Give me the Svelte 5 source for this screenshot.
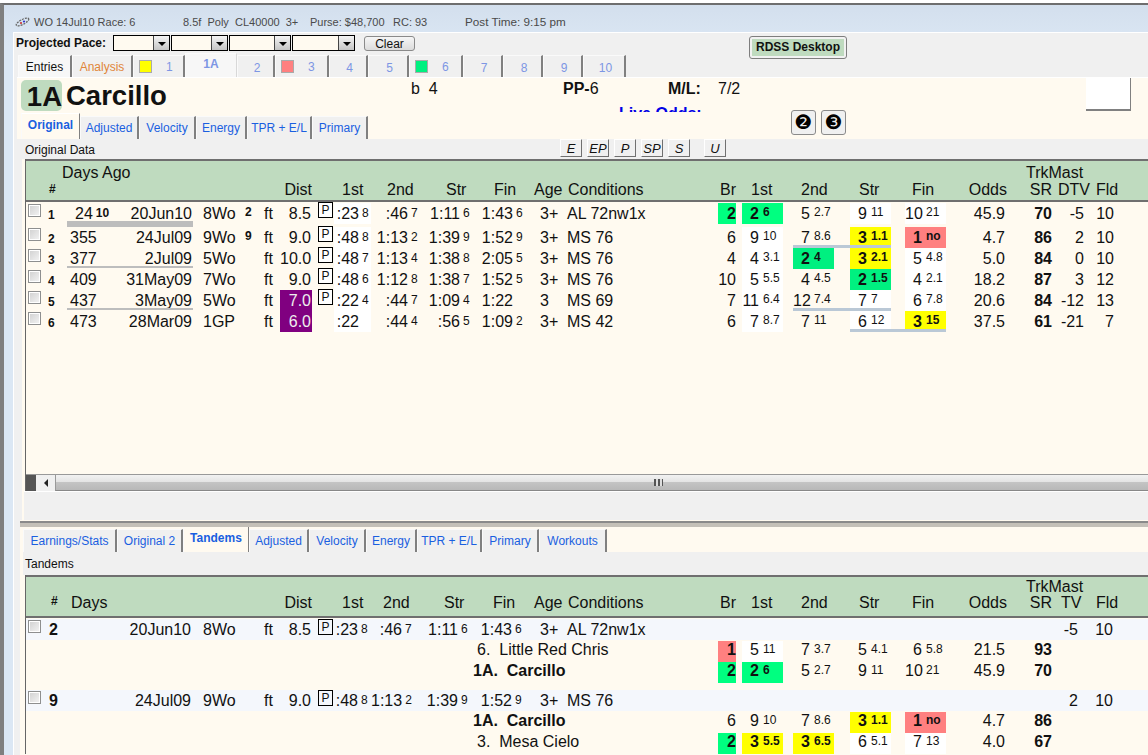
<script lang="ts">
  const raceTabs = [
    { label: '1', w: 52, swatch: 'yellow' },
    { label: '1A', w: 52, active: true },
    { label: '2', w: 38 },
    { label: '3', w: 54, swatch: 'pink' },
    { label: '4', w: 39 },
    { label: '5', w: 41 },
    { label: '6', w: 54, swatch: 'green' },
    { label: '7', w: 40 },
    { label: '8', w: 40 },
    { label: '9', w: 40 },
    { label: '10', w: 43 },
  ];

  const upperTabs = [
    { label: 'Original', w: 59, active: true },
    { label: 'Adjusted', w: 59 },
    { label: 'Velocity', w: 57 },
    { label: 'Energy', w: 51 },
    { label: 'TPR + E/L', w: 65 },
    { label: 'Primary', w: 56 },
  ];

  const lowerTabs = [
    { label: 'Earnings/Stats', w: 94 },
    { label: 'Original 2', w: 66 },
    { label: 'Tandems', w: 66, active: true },
    { label: 'Adjusted', w: 60 },
    { label: 'Velocity', w: 57 },
    { label: 'Energy', w: 51 },
    { label: 'TPR + E/L', w: 65 },
    { label: 'Primary', w: 57 },
    { label: 'Workouts', w: 68 },
  ];

  // t = [value, rank], p = [pos, lengths, colour, underline]
  const rows = [
    {
      n: 1, days: '24', daysSup: '10', date: '20Jun10', race: '8Wo', post: '2', dist: '8.5', pp: true,
      t: [[':23', '8'], [':46', '7'], ['1:11', '6'], ['1:43', '6']], age: '3+', cond: 'AL 72nw1x',
      br: '2', brC: 'g',
      p: [['2', '6', 'g'], ['5', '2.7', ''], ['9', '11', 'w'], ['10', '21', 'w']],
      odds: '45.9', sr: '70', dtv: '-5', fld: '10', ul: 'thick',
    },
    {
      n: 2, days: '355', date: '24Jul09', race: '9Wo', post: '9', dist: '9.0', pp: true,
      t: [[':48', '8'], ['1:13', '2'], ['1:39', '9'], ['1:52', '9']], age: '3+', cond: 'MS 76',
      br: '6',
      p: [['9', '10', 'w'], ['7', '8.6', '', 'full'], ['3', '1.1', 'y', 'inner'], ['1', 'no', 'p']],
      odds: '4.7', sr: '86', dtv: '2', fld: '10',
    },
    {
      n: 3, days: '377', date: '2Jul09', race: '5Wo', dist: '10.0', pp: true,
      t: [[':48', '7'], ['1:13', '4'], ['1:38', '8'], ['2:05', '5']], age: '3+', cond: 'MS 76',
      br: '4',
      p: [['4', '3.1', 'w'], ['2', '4', 'g2'], ['3', '2.1', 'y'], ['5', '4.8', 'w']],
      odds: '5.0', sr: '84', dtv: '0', fld: '10', ul: 'thin',
    },
    {
      n: 4, days: '409', date: '31May09', race: '7Wo', dist: '9.0', pp: true,
      t: [[':48', '6'], ['1:12', '8'], ['1:38', '7'], ['1:52', '5']], age: '3+', cond: 'MS 76',
      br: '10',
      p: [['5', '5.5', 'w'], ['4', '4.5', ''], ['2', '1.5', 'g2'], ['4', '2.1', 'w']],
      odds: '18.2', sr: '87', dtv: '3', fld: '12',
    },
    {
      n: 5, days: '437', date: '3May09', race: '5Wo', dist: '7.0', short: true, pp: true,
      t: [[':22', '4'], [':44', '7'], ['1:09', '4'], ['1:22', '']], age: '3', cond: 'MS 69',
      br: '7',
      p: [['11', '6.4', 'w'], ['12', '7.4', '', 'full'], ['7', '7', 'w', 'inner'], ['6', '7.8', 'w']],
      odds: '20.6', sr: '84', dtv: '-12', fld: '13', ul: 'thin',
    },
    {
      n: 6, days: '473', date: '28Mar09', race: '1GP', dist: '6.0', short: true,
      t: [[':22', ''], [':44', '4'], [':56', '5'], ['1:09', '2']], age: '3+', cond: 'MS 42',
      br: '6',
      p: [['7', '8.7', 'w'], ['7', '11', ''], ['6', '12', 'w', 'full'], ['3', '15', 'y', 'inner']],
      odds: '37.5', sr: '61', dtv: '-21', fld: '7',
    },
  ];

  const tandems = [
    {
      n: '2', date: '20Jun10', race: '8Wo', dist: '8.5',
      t: [[':23', '8'], [':46', '7'], ['1:11', '6'], ['1:43', '6']], age: '3+', cond: 'AL 72nw1x', tv: '-5', fld: '10',
      horses: [
        { name: '6.  Little Red Chris', br: '1', brC: 'p', p: [['5', '11', 'w'], ['7', '3.7', ''], ['5', '4.1', ''], ['6', '5.8', '']], odds: '21.5', sr: '93' },
        { name: '1A.  Carcillo', main: true, br: '2', brC: 'g', p: [['2', '6', 'g'], ['5', '2.7', ''], ['9', '11', ''], ['10', '21', '']], odds: '45.9', sr: '70' },
      ],
    },
    {
      n: '9', date: '24Jul09', race: '9Wo', dist: '9.0',
      t: [[':48', '8'], ['1:13', '2'], ['1:39', '9'], ['1:52', '9']], age: '3+', cond: 'MS 76', tv: '2', fld: '10',
      horses: [
        { name: '1A.  Carcillo', main: true, br: '6', brC: '', p: [['9', '10', ''], ['7', '8.6', ''], ['3', '1.1', 'y'], ['1', 'no', 'p']], odds: '4.7', sr: '86' },
        { name: '3.  Mesa Cielo', br: '2', brC: 'g', p: [['3', '5.5', 'y'], ['3', '6.5', 'y'], ['6', '5.1', 'w'], ['7', '13', 'w']], odds: '4.0', sr: '67' },
      ],
    },
  ];
</script>

{#snippet time(t, i)}
  <div class={`c time t${i + 1}`}><span>{t[0]}</span><sup class="rank">{t[1]}</sup></div>
{/snippet}

{#snippet pos(p, i)}
  <div class={`c pcol ${p[3] ? `ul-${p[3]}` : ''}`}>
    <div class={`pos ${p[2]}`}><span class="pn">{p[0]}</span><sup class="ps">{p[1]}</sup></div>
  </div>
{/snippet}

{#snippet checkbox()}
  <div class="c"><span class="check"></span></div>
{/snippet}

{#snippet tabstrip(tabs, cls)}
  <div class={`tabs ${cls}`}>
    {#each tabs as tab}
      <div class="tab" class:active={tab.active} style={`width:${tab.w}px`}>{tab.label}</div>
    {/each}
  </div>
{/snippet}

<div class="frame">
  <div class="title">
    <svg class="logo" width="15" height="12" viewBox="0 0 15 12">
      <ellipse cx="7.5" cy="6" rx="7" ry="2.4" transform="rotate(-28 7.5 6)" fill="none" stroke="#666" stroke-width="1.3" stroke-dasharray="2 1" />
      <circle cx="6" cy="7" r="1.1" fill="#c33" />
      <circle cx="9" cy="5.5" r="1.1" fill="#33c" />
    </svg>
    <span class="t-a">WO 14Jul10 Race: 6</span>
    <span class="t-b">8.5f&nbsp; Poly&nbsp; CL40000&nbsp; 3+</span>
    <span class="t-c">Purse: $48,700</span>
    <span class="t-d">RC: 93</span>
    <span class="t-e">Post Time: 9:15 pm</span>
  </div>

  <div class="content">
    <div class="head">
      <div class="head-left">
        <div class="pace">
          <b>Projected Pace:</b>
          <div class="combos">
            {#each [57, 57, 62, 63] as w}
              <div class="combo" style={`width:${w}px`}><span class="drop"></span></div>
            {/each}
          </div>
          <div class="clear">Clear</div>
        </div>
        <div class="racetabs">
          <div class="tab entries">Entries</div>
          <div class="tab analysis">Analysis</div>
          {#each raceTabs as tab}
            <div class="tab race" class:active={tab.active} class:swatched={tab.swatch} style={`width:${tab.w}px`}>
              {#if tab.swatch}<span class={`swatch ${tab.swatch}`}></span>{/if}
              <span class="race-no">{tab.label}</span>
            </div>
          {/each}
        </div>
      </div>
      <div class="rdss"><span>RDSS Desktop</span></div>
    </div>

    <div class="info">
      <div class="info-top">
        <div class="badge">1A</div>
        <div class="horse">Carcillo</div>
        <div class="age">b&nbsp; 4</div>
        <div class="pp-col">
          <div class="pp-line"><span class="pp-lbl"><b>PP-</b>6</span><b class="ml">M/L:</b><span>7/2</span></div>
          <div class="live">Live Odds:</div>
        </div>
        <div class="whitebox"></div>
      </div>
      <div class="info-tabs">
        {@render tabstrip(upperTabs, 'sub')}
        <div class="circle">❷</div>
        <div class="circle">❸</div>
      </div>
    </div>

    <div class="upper">
      <div class="band">
        <span class="band-label">Original Data</span>
        <div class="styles">
          {#each ['E', 'EP', 'P', 'SP', 'S'] as s}<div class="style-btn">{s}</div>{/each}
          <div class="style-btn u">U</div>
        </div>
      </div>
      <div class="table">
        <div class="thead">
          <div class="grid line1">
            <div class="h days-ago">Days Ago</div>
            <div class="h trk">TrkMast</div>
          </div>
          <div class="grid line2">
            <div class="h hash" style="grid-column:2">#</div>
            <div class="h r" style="grid-column:8">Dist</div>
            <div class="h" style="grid-column:10;padding-left:8px">1st</div>
            <div class="h" style="grid-column:11;padding-left:16px">2nd</div>
            <div class="h" style="grid-column:12;padding-left:22px">Str</div>
            <div class="h" style="grid-column:13;padding-left:21px">Fin</div>
            <div class="h" style="grid-column:14;padding-left:8px">Age</div>
            <div class="h" style="grid-column:15;padding-left:1px">Conditions</div>
            <div class="h" style="grid-column:16;padding-left:2px">Br</div>
            <div class="h" style="grid-column:17;padding-left:9px">1st</div>
            <div class="h" style="grid-column:18;padding-left:8px">2nd</div>
            <div class="h" style="grid-column:19;padding-left:9px">Str</div>
            <div class="h" style="grid-column:20;padding-left:7px">Fin</div>
            <div class="h r" style="grid-column:21">Odds</div>
            <div class="h r" style="grid-column:22;padding-right:1px">SR</div>
            <div class="h" style="grid-column:23;padding-left:5px">DTV</div>
            <div class="h" style="grid-column:24;padding-left:11px">Fld</div>
          </div>
        </div>
        <div class="tbody">
          {#each rows as r, i}
            <div class="grid row" class:first={i === 0}>
              {@render checkbox()}
              <div class="c num">{r.n}</div>
              <div class={`c days ${r.ul ?? ''}`} class:sup24={r.daysSup}>{r.days}{#if r.daysSup}<sup class="dsup">{r.daysSup}</sup>{/if}</div>
              <div class={`c date ${r.ul ?? ''}`}>{r.date}</div>
              <div class="c racecol">{r.race}</div>
              <div class="c post">{r.post ?? ''}</div>
              <div class="c surf">ft</div>
              <div class="c dist" class:short={r.short}>{r.dist}</div>
              <div class="c">{#if r.pp}<span class="pbox">P</span>{/if}</div>
              {#each r.t as t, j}{@render time(t, j)}{/each}
              <div class="c agec">{r.age}</div>
              <div class="c cond">{r.cond}</div>
              <div class="c"><div class={`br ${r.brC ?? ''}`}>{r.br}</div></div>
              {#each r.p as p, j}{@render pos(p, j)}{/each}
              <div class="c odds">{r.odds}</div>
              <div class="c sr">{r.sr}</div>
              <div class="c dtv">{r.dtv}</div>
              <div class="c fld">{r.fld}</div>
            </div>
          {/each}
        </div>
        <div class="scrollbar">
          <div class="sb-corner"></div>
          <div class="sb-left"><span class="sb-arrow"></span></div>
          <div class="sb-thumb"><span class="grip"></span></div>
        </div>
      </div>
      <div class="pad"></div>
    </div>

    <div class="splitter"></div>

    <div class="lower">
      {@render tabstrip(lowerTabs, 'sub lowertabs')}
      <div class="band low"><span>Tandems</span></div>
      <div class="table tand">
        <div class="thead">
          <div class="grid line1">
            <div class="h trk">TrkMast</div>
          </div>
          <div class="grid line2">
            <div class="h hash tandhash" style="grid-column:2">#</div>
            <div class="h" style="grid-column:3;padding-left:4px">Days</div>
            <div class="h r" style="grid-column:8">Dist</div>
            <div class="h" style="grid-column:10;padding-left:8px">1st</div>
            <div class="h" style="grid-column:11;padding-left:12px">2nd</div>
            <div class="h" style="grid-column:12;padding-left:20px">Str</div>
            <div class="h" style="grid-column:13;padding-left:20px">Fin</div>
            <div class="h" style="grid-column:14;padding-left:8px">Age</div>
            <div class="h" style="grid-column:15;padding-left:1px">Conditions</div>
            <div class="h" style="grid-column:16;padding-left:2px">Br</div>
            <div class="h" style="grid-column:17;padding-left:9px">1st</div>
            <div class="h" style="grid-column:18;padding-left:8px">2nd</div>
            <div class="h" style="grid-column:19;padding-left:9px">Str</div>
            <div class="h" style="grid-column:20;padding-left:7px">Fin</div>
            <div class="h r" style="grid-column:21">Odds</div>
            <div class="h r" style="grid-column:22;padding-right:1px">SR</div>
            <div class="h" style="grid-column:23;padding-left:8px">TV</div>
            <div class="h" style="grid-column:24;padding-left:11px">Fld</div>
          </div>
        </div>
        <div class="tbody tandbody">
          {#each tandems as g}
            <div class="group">
              <div class="grid row section">
                {@render checkbox()}
                <div class="c secno">{g.n}</div>
                <div class="c"></div>
                <div class="c date">{g.date}</div>
                <div class="c racecol">{g.race}</div>
                <div class="c post"></div>
                <div class="c surf">ft</div>
                <div class="c dist">{g.dist}</div>
                <div class="c"><span class="pbox">P</span></div>
                {#each g.t as t, j}{@render time(t, j)}{/each}
                <div class="c agec">{g.age}</div>
                <div class="c cond">{g.cond}</div>
                <div class="c tvcell" style="grid-column:23">{g.tv}</div>
                <div class="c tfld">{g.fld}</div>
              </div>
              {#each g.horses as h}
                <div class="grid row child">
                  <div class="c hname" class:main={h.main}>{h.name}</div>
                  <div class="c" style="grid-column:16"><div class={`br ${h.brC}`}>{h.br}</div></div>
                  {#each h.p as p, j}{@render pos(p, j)}{/each}
                  <div class="c odds">{h.odds}</div>
                  <div class="c sr">{h.sr}</div>
                </div>
              {/each}
            </div>
          {/each}
        </div>
      </div>
    </div>
  </div>
</div>

<style>
  :global(body) {
    margin: 0;
    background: #fff;
    overflow: hidden;
  }

  .frame {
    box-sizing: border-box;
    height: 752px;
    margin-top: 3px;
    overflow: hidden;
    border-top: 2px solid #6e6e6e;
    border-left: 4px solid #7f7f7f;
    padding-left: 9px;
    background: linear-gradient(#d3dfed, #dbe7f4 40px);
    font-family: 'Liberation Sans', Arial, sans-serif;
    font-size: 16px;
    color: #111;
  }

  .title {
    height: 27px;
    display: flex;
    align-items: center;
    padding-top: 6px;
    box-sizing: border-box;
    font-size: 11px;
    color: #4a4a4a;
    white-space: nowrap;
  }

  .logo {
    margin-left: 2px;
    flex: none;
  }

  .t-a {
    margin-left: 4px;
    width: 149px;
  }
  .t-b {
    width: 127px;
  }
  .t-c {
    width: 83px;
  }
  .t-d {
    width: 72px;
  }
  .t-e {
    font-size: 11.7px;
  }

  .content {
    background: #f0f0f0;
    border-top: 1px solid #fff;
    border-left: 1px solid #fff;
    min-height: 722px;
  }

  .head {
    display: flex;
    height: 44px;
  }

  .head-left {
    width: 735px;
    flex: none;
  }

  .pace {
    display: flex;
    height: 21px;
    padding: 2px 0 0 2px;
    box-sizing: border-box;
    font-size: 12px;
  }

  .pace b {
    width: 97px;
    line-height: 17px;
  }

  .combos {
    display: flex;
    gap: 1px;
    height: 16px;
  }

  .combo {
    box-sizing: border-box;
    border: 1px solid #000;
    background: #fffaf0;
    display: flex;
    justify-content: flex-end;
  }

  .drop {
    width: 15px;
    background: linear-gradient(#f4f4f4, #c4c4c4);
    border-left: 1px solid #444;
    position: relative;
  }

  .drop::after {
    content: '';
    position: absolute;
    left: 4px;
    top: 6px;
    border: 4px solid transparent;
    border-top: 4px solid #000;
    border-bottom: 0;
  }

  .clear {
    box-sizing: border-box;
    width: 51px;
    height: 15px;
    margin: 1px 0 0 9px;
    border: 1px solid #8a8a8a;
    border-radius: 3px;
    background: linear-gradient(#f6f6f6, #dcdcdc);
    text-align: center;
    line-height: 14px;
    font-size: 12px;
  }

  .racetabs {
    display: flex;
    padding-left: 4px;
    height: 23px;
    align-items: flex-end;
  }

  .tab {
    box-sizing: border-box;
    flex: none;
    height: 22px;
    background: #f0f0f0;
    border-top: 1px solid #fafafa;
    border-left: 1px solid #fafafa;
    border-right: 2px solid #808080;
    display: flex;
    align-items: center;
    justify-content: center;
    font-size: 12px;
    white-space: nowrap;
  }

  .entries {
    width: 54px;
    background: #f7f7f7;
  }

  .analysis {
    width: 61px;
    color: #e0863a;
  }

  .race {
    color: #7d96e4;
    padding-top: 2px;
    padding-left: 3px;
  }

  .race.swatched {
    justify-content: flex-start;
    gap: 14px;
    padding-left: 5px;
    padding-top: 0;
  }

  .race.active {
    height: 24px;
    background: #f7f7f7;
    border-right: 1px solid #d8d8d8;
    font-weight: bold;
    padding-top: 0;
    padding-left: 0;
    padding-bottom: 3px;
  }

  .swatch {
    box-sizing: border-box;
    width: 13px;
    height: 13px;
    border: 1px solid #aaa;
  }
  .swatch.yellow {
    background: #ffff00;
  }
  .swatch.pink {
    background: #ff8080;
  }
  .swatch.green {
    background: #00f080;
  }

  .rdss {
    box-sizing: border-box;
    width: 98px;
    height: 23px;
    margin: 3px 0 0 0;
    border: 1px solid #7e7e7e;
    border-radius: 3px;
    background: #f2f2f2;
    padding: 2px;
    font-size: 12px;
    font-weight: bold;
  }

  .rdss span {
    display: block;
    height: 100%;
    background: #bfdbbf;
    text-align: center;
    line-height: 17px;
  }

  .info {
    margin-left: 3px;
    height: 62px;
    background: #fffaf0;
    border-top: 1px solid #fff;
    box-sizing: border-box;
  }

  .info-top {
    display: flex;
    height: 34px;
    overflow: hidden;
  }

  .badge {
    box-sizing: border-box;
    width: 41px;
    height: 31px;
    margin: 2px 0 0 4px;
    background: #bfdbbf;
    border-radius: 5px;
    font-size: 27.5px;
    font-weight: bold;
    text-align: right;
    line-height: 33px;
    flex: none;
  }

  .horse {
    width: 345px;
    margin-left: 4px;
    font-size: 27.5px;
    font-weight: bold;
    line-height: 35px;
    flex: none;
  }

  .age {
    width: 152px;
    padding-top: 1px;
    line-height: 19px;
  }

  .pp-col {
    width: 523px;
    flex: none;
  }

  .pp-line {
    display: flex;
    height: 26px;
    padding-top: 1px;
    line-height: 19px;
  }

  .pp-lbl {
    width: 105px;
  }

  .ml {
    width: 50px;
  }

  .live {
    margin-left: 56px;
    font-weight: bold;
    color: #0000e6;
    line-height: 18px;
  }

  .whitebox {
    box-sizing: border-box;
    width: 45px;
    height: 33px;
    background: #fff;
    border-right: 1px solid #808080;
    border-bottom: 2px solid #808080;
    flex: none;
  }

  .info-tabs {
    display: flex;
    height: 27px;
    align-items: flex-end;
    padding-left: 4px;
  }

  .tabs {
    display: flex;
    align-items: flex-end;
    flex: none;
  }

  .sub .tab {
    height: 23px;
    color: #1a5fe0;
  }

  .sub .tab.active {
    height: 26px;
    font-weight: bold;
    background: #fffaf0;
    border-top: 1px solid #fff;
    border-right: 1px solid #808080;
    padding-bottom: 4px;
  }

  .info-tabs .tabs {
    width: 770px;
  }

  .circle {
    box-sizing: border-box;
    flex: none;
    width: 25px;
    height: 25px;
    margin: 0 5px 4px 0;
    border: 1px solid #8a8a8a;
    border-radius: 3px;
    background: #f0f0f0;
    text-align: center;
    font-family: 'DejaVu Sans', sans-serif;
    font-size: 20px;
    line-height: 22px;
    color: #000;
  }

  .upper {
    margin-left: 8px;
    background: #fffaf0;
  }

  .band {
    display: flex;
    height: 20px;
    background: #f0f0f0;
    padding-left: 3px;
    font-size: 12px;
    line-height: 23px;
  }

  .band-label {
    width: 535px;
    flex: none;
  }

  .styles {
    display: flex;
    gap: 5px;
  }

  .style-btn {
    box-sizing: border-box;
    width: 22px;
    height: 18px;
    background: #f0f0f0;
    border: 1px solid #fff;
    border-right: 1px solid #707070;
    border-bottom: 1px solid #707070;
    font-style: italic;
    font-size: 13px;
    text-align: center;
    line-height: 17px;
  }

  .style-btn.u {
    margin-left: 9px;
  }

  .table {
    margin-left: 3px;
    border-left: 1px solid #666;
  }

  .thead {
    border-top: 2px solid #6f6f6f;
    border-bottom: 2px solid #6f6f6f;
    background: #bfdbbf;
    height: 39px;
    color: #111;
  }

  .grid {
    display: grid;
    grid-template-columns: 18px 23px 36px 90px 47px 18px 22px 32px 22px 37px 53px 49px 53px 41px 151px 24px 51px 57px 55px 45px 57px 46px 32px 30px 1fr;
  }

  .line1 {
    height: 18px;
    line-height: 23px;
  }

  .line2 {
    height: 21px;
    line-height: 21px;
  }

  .h {
    white-space: nowrap;
  }

  .h.r {
    text-align: right;
  }

  .days-ago {
    grid-column: 3;
    margin-left: -5px;
  }

  .trk {
    grid-column: 22;
    padding-left: 19px;
  }

  .hash {
    font-size: 12px;
    font-weight: bold;
    padding-left: 5px;
  }

  .tand .line1 {
    line-height: 20px;
  }

  .tand .line2 {
    line-height: 15px;
  }

  .tandhash {
    padding-left: 7px;
    margin-top: -1px;
  }

  .tbody {
    height: 272px;
    background: #fffaf0;
  }

  .row {
    height: 21px;
    line-height: 21px;
  }

  .row.first {
    height: 25px;
    padding-top: 1px;
    box-sizing: border-box;
  }

  .c {
    height: 21px;
    position: relative;
    white-space: nowrap;
  }

  .check {
    display: block;
    box-sizing: border-box;
    width: 13px;
    height: 13px;
    margin: 1px 0 0 2px;
    border: 1px solid #8e8f8f;
    background: linear-gradient(135deg, #d0d0d0, #f4f4f4);
    box-shadow: inset 0 0 0 1px #fff;
  }

  .num {
    font-size: 12px;
    font-weight: bold;
    padding-left: 4px;
    line-height: 24px;
  }

  .days {
    padding-left: 3px;
  }

  .sup24 {
    padding-left: 8px;
  }

  .dsup {
    font-size: 12px;
    font-weight: bold;
    margin-left: 3px;
    vertical-align: 2px;
    line-height: 0;
  }

  .date {
    text-align: right;
    padding-right: 1px;
  }

  .thick::after,
  .thin::after {
    content: '';
    position: absolute;
    left: 0;
    right: 0;
    background: #bdbdbd;
  }

  .thick::after {
    bottom: -3px;
    height: 6px;
  }

  .thin::after {
    bottom: 1px;
    height: 2px;
  }

  .racecol {
    padding-left: 10px;
  }

  .post {
    font-size: 12px;
    font-weight: bold;
    padding-left: 5px;
    line-height: 19px;
  }

  .surf {
    padding-left: 6px;
  }

  .dist {
    text-align: right;
    padding-right: 1px;
  }

  .dist.short {
    background: #800080;
    color: #eee;
  }

  .pbox {
    display: block;
    box-sizing: border-box;
    width: 15px;
    height: 16px;
    margin: -1px 0 0 6px;
    border: 1px solid #000;
    background: #fff;
    font-size: 12px;
    line-height: 14px;
    text-align: center;
  }

  .time {
    text-align: right;
  }

  .rank {
    display: inline-block;
    width: 7px;
    margin-left: 3px;
    font-size: 12px;
    vertical-align: 2px;
    line-height: 0;
    text-align: left;
  }

  .t1 {
    background: #fff;
    padding-right: 2px;
  }
  .t2 {
    padding-right: 6px;
  }
  .t3 {
    padding-right: 3px;
  }
  .t4 {
    padding-right: 3px;
  }

  .agec {
    padding-left: 14px;
  }

  .cond {
    padding-left: 0;
  }

  .br {
    width: 18px;
    height: 21px;
    text-align: right;
    box-sizing: border-box;
    padding-right: 0;
  }

  .br.g,
  .br.p {
    font-weight: bold;
  }

  .pos {
    display: flex;
    width: 41px;
    height: 21px;
  }

  .pn {
    width: 17px;
    text-align: right;
    flex: none;
  }

  .ps {
    margin-left: 4px;
    font-size: 12px;
    line-height: 18px;
    vertical-align: baseline;
  }

  .pos.g,
  .br.g {
    background: #00ff80;
  }
  .pos.g2 {
    background: #00f080;
  }
  .pos.y {
    background: #ffff00;
  }
  .pos.p,
  .br.p {
    background: #ff8080;
  }
  .pos.w {
    background: #fff;
  }

  .pos.g,
  .pos.g2,
  .pos.y,
  .pos.p {
    font-weight: bold;
  }

  .ul-full::after,
  .ul-inner::after {
    content: '';
    position: absolute;
    left: 0;
    bottom: 0;
    height: 3px;
    background: #bac8d6;
  }

  .ul-full::after {
    right: 0;
  }

  .ul-inner::after {
    width: 41px;
  }

  .odds {
    grid-column: 21;
    text-align: right;
    padding-right: 2px;
  }

  .sr {
    text-align: right;
    font-weight: bold;
    padding-right: 1px;
  }

  .dtv,
  .fld {
    text-align: right;
    padding-right: 1px;
  }

  .scrollbar {
    display: flex;
    height: 17px;
    overflow: hidden;
    border-top: 1px solid #999;
    box-sizing: border-box;
    background: #f0f0f0;
  }

  .sb-corner {
    width: 10px;
    background: #555;
    flex: none;
  }

  .sb-left {
    width: 19px;
    flex: none;
    background: #f0f0f0;
    display: flex;
    align-items: center;
    justify-content: center;
  }

  .sb-arrow {
    border: 4px solid transparent;
    border-right: 4px solid #222;
    border-left: 0;
  }

  .sb-thumb {
    flex: none;
    width: 1206px;
    display: flex;
    align-items: center;
    justify-content: center;
    background: linear-gradient(#f2f2f2, #e4e4e4 45%, #c4c4c4 50%, #b8b8b8);
    border-bottom: 1px solid #888;
    border-left: 1px solid #999;
    box-sizing: border-box;
  }

  .grip {
    width: 9px;
    height: 7px;
    background: repeating-linear-gradient(90deg, #555 0 2px, #ddd 2px 4px);
  }

  .pad {
    height: 28px;
    margin-left: 2px;
    background: #f0f0f0;
    border-top: 1px solid #fff;
  }

  .splitter {
    margin-left: 6px;
    height: 7px;
    background: linear-gradient(#8a8a8a 0 2px, #c4c0b8 2px);
    border-top: 1px solid #fffaf0;
    box-sizing: border-box;
  }

  .lower {
    margin-left: 6px;
    background: #fffaf0;
    height: 230px;
    overflow: hidden;
  }

  .lowertabs {
    padding-left: 3px;
    height: 25px;
  }

  .band.low {
    margin-left: 3px;
    height: 23px;
    padding-left: 2px;
    line-height: 25px;
  }

  .table.tand {
    margin-left: 5px;
  }

  .tandbody {
    height: auto;
    padding-top: 1px;
  }

  .group {
    margin-bottom: 7px;
  }

  .section {
    background: #f4f7fc;
    line-height: 21px;
  }

  .section .check {
    margin-top: 1px;
  }

  .section .t1,
  .section .pbox {
    background: transparent;
  }

  .section .t1 {
    padding-right: 3px;
  }
  .section .t2 {
    padding-right: 12px;
  }
  .section .t3 {
    padding-right: 5px;
  }
  .section .t4 {
    padding-right: 4px;
  }
  .section .date {
    padding-right: 2px;
  }
  .section .dist {
    padding-right: 1px;
  }
  .section .agec {
    padding-left: 14px;
  }

  .section .pbox {
    margin-top: 0;
    line-height: 14px;
  }

  .secno {
    font-weight: bold;
    padding-left: 5px;
  }

  .tvcell {
    text-align: right;
    padding-right: 7px;
  }

  .tfld {
    text-align: right;
    padding-right: 2px;
  }

  .child {
    margin-top: 1px;
    height: 20px;
    line-height: 18px;
  }

  .child + .child {
    margin-top: 0;
    height: 21px;
    padding-top: 1px;
  }

  .child .ps {
    line-height: 16px;
  }

  .hname {
    grid-column: 12 / span 4;
    padding-left: 53px;
    white-space: pre;
  }

  .hname.main {
    font-weight: bold;
    padding-left: 49px;
  }
</style>
